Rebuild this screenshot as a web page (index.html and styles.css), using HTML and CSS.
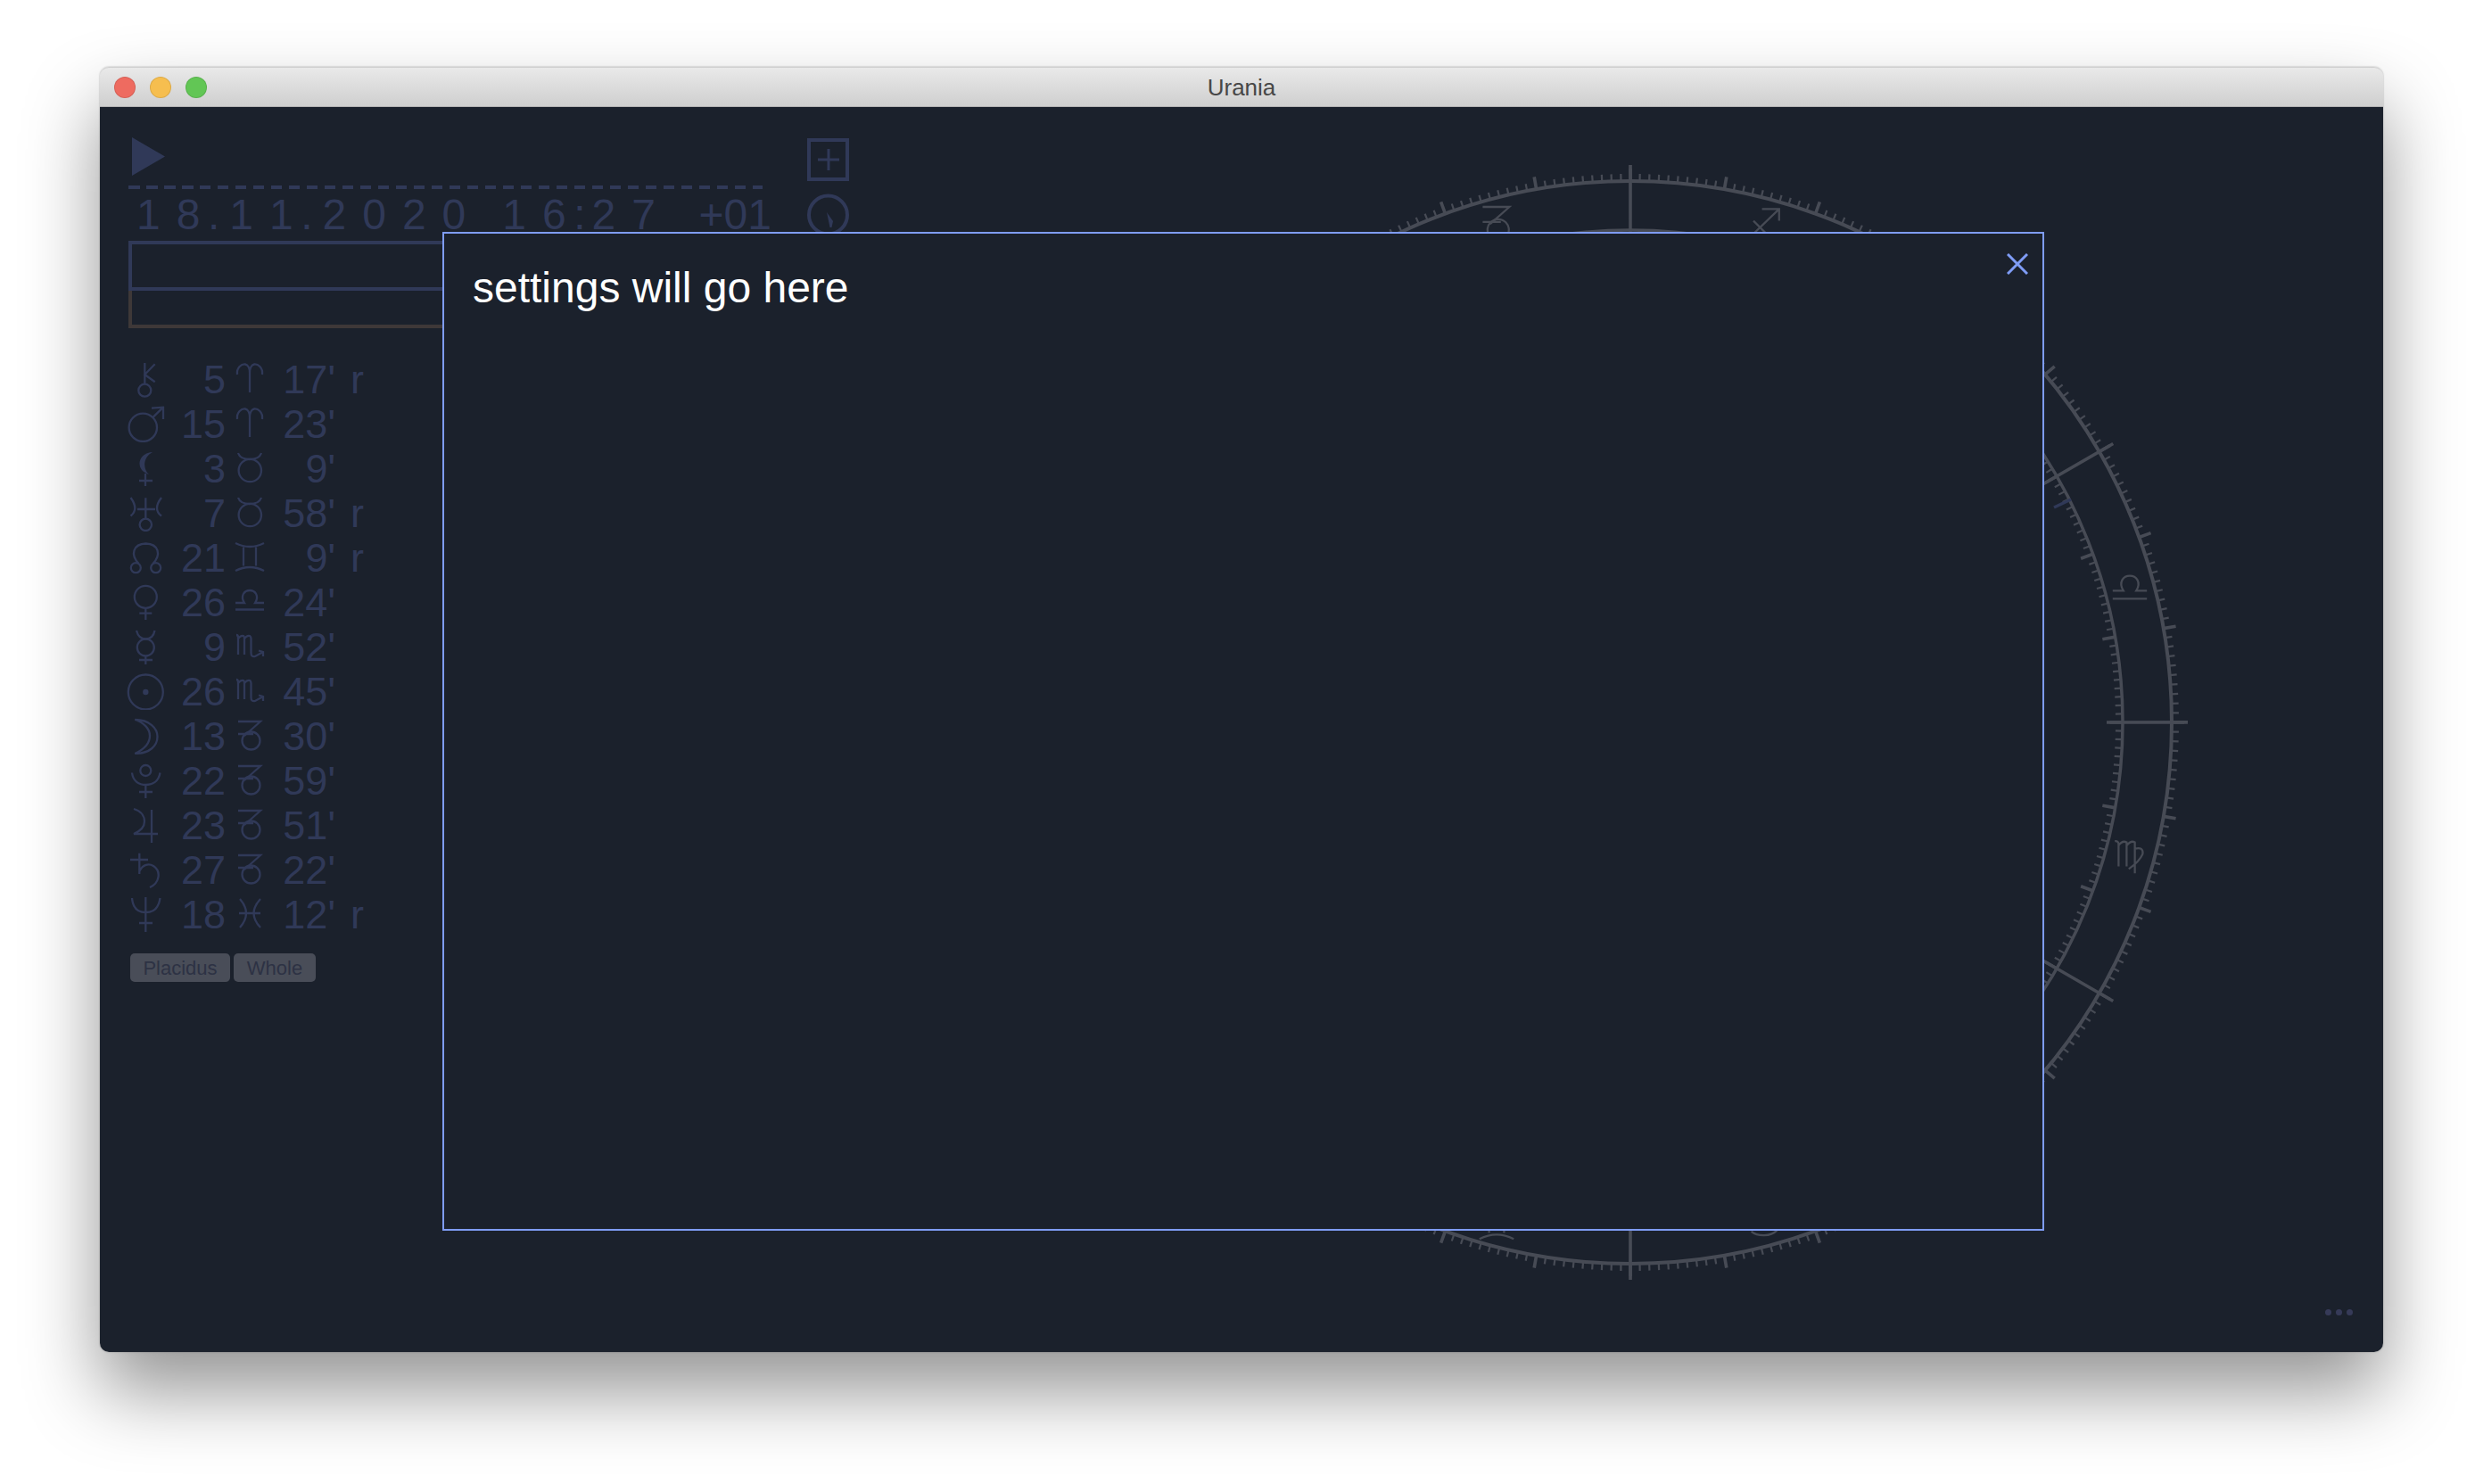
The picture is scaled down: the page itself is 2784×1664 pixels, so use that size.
FILE: index.html
```html
<!DOCTYPE html>
<html lang="en">
<head>
<meta charset="utf-8">
<title>Urania</title>
<link rel="stylesheet" href="styles.css">
</head>
<body>
<svg class="defs" width="0" height="0" aria-hidden="true">
  <defs>
    <symbol id="chiron" viewBox="-22 -22 44 44"><circle cx="-0.7" cy="13.7" r="7"/><path d="M-0.7-17V7M10.7-15.7-0.7-4 10.7 4.3"/></symbol>
    <symbol id="mars" viewBox="-22 -22 44 44"><circle cx="-2.7" cy="5.3" r="15.7"/><path d="M8-5.7 20-17.3M7-16.3 20-17.3V-4"/></symbol>
    <symbol id="lilith" viewBox="-22 -22 44 44"><path class="solid" d="M8-17C-9-16-12 3 4 8-3 2-3-11 8-17Z"/><path d="M0 7V21M-7 15H8"/></symbol>
    <symbol id="uranus" viewBox="-22 -22 44 44"><circle cx="0.3" cy="14.3" r="6.7"/><path d="M.3-15.7V7.6M-16.5-16Q-7-3-16.5 4.5M18-16Q8-3 18 4.5M-9-3H11"/></symbol>
    <symbol id="node" viewBox="-22 -22 44 44"><circle cx="-10.7" cy="12.7" r="5.5"/><circle cx="11.7" cy="12.7" r="5.5"/><path d="M-7.5 8C-17-2-14-14 .5-14.5 15-14 18-2 8.5 8"/></symbol>
    <symbol id="venus" viewBox="-22 -22 44 44"><circle cx="0.3" cy="-4.7" r="12.5"/><path d="M.3 7.8V21M-6.7 13.7H7.3"/></symbol>
    <symbol id="mercury" viewBox="-22 -22 44 44"><circle cx="0.3" cy="2" r="9.5"/><path d="M.3 11.5V21M-7 16H8M-10-17C-8-9-4-7.5.3-7.5 5-7.5 9-9 10.5-17"/></symbol>
    <symbol id="sun" viewBox="-22 -22 44 44"><circle cx="0.3" cy="2" r="19.5"/><circle class="solid" cx="0.3" cy="2" r="3.2"/></symbol>
    <symbol id="moon" viewBox="-22 -22 44 44"><path d="M-11.7-17C5-17 13.5-7 13.5 2 13.5 12 5 21-11.7 21-1 16 5 9 5 1 5-7-2-14-11.7-17Z"/></symbol>
    <symbol id="pluto" viewBox="-22 -22 44 44"><circle cx="0.3" cy="-10" r="6"/><path d="M-15-7.5C-14 2-7 6 .3 6 8 6 15 2 16.5-7.5M.3 6V21M-7 14H8"/></symbol>
    <symbol id="jupiter" viewBox="-22 -22 44 44"><path d="M-13-17C-3-14-1-7-1-3-1 3-6 8-13 11H14M7-16V21"/></symbol>
    <symbol id="saturn" viewBox="-22 -22 44 44"><path d="M-6.7-17.3V6M-17-10H3M-6.7 3C-3-5 4-6 9-3 18 3 16 16 5 21"/></symbol>
    <symbol id="neptune" viewBox="-22 -22 44 44"><path d="M-15-17C-14-5-8-1 .3-1 8-1 15-5 16.5-17M.3-18V21M-7 11H8"/></symbol>
    <symbol id="aries" viewBox="-22 -22 44 44"><path d="M0 16V-6C0-11-2-15-5-15.5-9-16-15-12-14-4M0-6C0-11 2-15 5-15.5 9-16 15-12 14-4"/></symbol>
    <symbol id="taurus" viewBox="-22 -22 44 44"><circle cx="0.3" cy="3.5" r="12.7"/><path d="M-13-16C-11-10-6-9 0-9 6-9 11-10 13-16"/></symbol>
    <symbol id="gemini" viewBox="-22 -22 44 44"><path d="M-16-15Q0-7 16-15M-16 16Q0 8 16 16M-7-10.500V10.500M7-10.500V10.500"/></symbol>
    <symbol id="libra" viewBox="-22 -22 44 44"><path d="M-16 9.500H16M-16 2H-6C-11-6-6-12 0-12 6-12 11-6 6 2H16"/></symbol>
    <symbol id="scorpio" viewBox="-22 -22 44 44"><path d="M-15-12Q-13-12-13-9V10M-13-8Q-10-12-7-11-6-10-6-8V10M-6-8Q-3-12 0-11 1.500-10 1.500-8V8Q1.500 13 6 12L15 7M10 5.500 15 7V12"/></symbol>
    <symbol id="capricorn" viewBox="-22 -22 44 44"><path d="M-13-15H12L-6 1M-13-1H4"/><circle cx="1.500" cy="6.500" r="10"/></symbol>
    <symbol id="pisces" viewBox="-22 -22 44 44"><path d="M-11-16Q3 0-11 16M12-16Q-3 0 12 16M-12 0H12"/></symbol>
    <symbol id="sagittarius" viewBox="-22 -22 44 44"><path d="M-14 14 14-13M-2-13H14V-2M-10-2 5 13"/></symbol>
    <symbol id="virgo" viewBox="-22 -22 44 44"><path d="M-14-14Q-10.500-14.500-10.500-11V9.500M-10.500-10Q-7-15-3-13V9.500M-3-10Q1-15 4.700-13V16M4.700-7Q13-9 12-2 9 5-1 12"/></symbol>
    <symbol id="cancer" viewBox="-22 -22 44 44"><path d="M-12 9C-6 14 6 14 12 8"/></symbol>
  </defs>
</svg>

<div class="window">
  <header class="titlebar">
    <div class="lights">
      <span class="light light-close"></span>
      <span class="light light-min"></span>
      <span class="light light-max"></span>
    </div>
    <div class="title">Urania</div>
  </header>

  <main class="content">
    <section class="sidebar">
      <div class="controls">
        <div class="play-stack">
          <svg class="play" width="37" height="43" viewBox="0 0 37 43"><path d="M0 0 37 21.500 0 43Z"/></svg>
          <div class="dashes"></div>
        </div>
        <div class="add-box"><svg width="24" height="24" viewBox="0 0 24 24"><path d="M12 0V24M0 12H24"/></svg></div>
        <div class="date">
          <span class="ch">1</span><span class="ch tight">8</span><span class="ch dot">.</span><span class="ch">1</span><span class="ch tight">1</span><span class="ch dot">.</span><span class="ch">2</span><span class="ch">0</span><span class="ch">2</span><span class="ch wide">0</span><span class="ch">1</span><span class="ch tight">6</span><span class="ch colon">:</span><span class="ch">2</span><span class="ch">7</span>
          <span class="zone">+01</span>
        </div>
        <svg class="clock" width="47" height="48" viewBox="0 0 47 48"><circle cx="23.500" cy="24" r="21.500"/><path class="solid" d="M22 21 29 31 27.500 38 25.500 38Z"/></svg>
      </div>

      <div class="range">
        <div class="range-top"></div>
        <div class="range-bottom"></div>
      </div>

      <div class="positions">
        <svg class="glyph"><use href="#chiron"/></svg><span class="deg">5</span><svg class="glyph sign"><use href="#aries"/></svg><span class="min">17'</span><span class="retro">r</span>
        <svg class="glyph"><use href="#mars"/></svg><span class="deg">15</span><svg class="glyph sign"><use href="#aries"/></svg><span class="min">23'</span><span class="retro"></span>
        <svg class="glyph"><use href="#lilith"/></svg><span class="deg">3</span><svg class="glyph sign"><use href="#taurus"/></svg><span class="min">9'</span><span class="retro"></span>
        <svg class="glyph"><use href="#uranus"/></svg><span class="deg">7</span><svg class="glyph sign"><use href="#taurus"/></svg><span class="min">58'</span><span class="retro">r</span>
        <svg class="glyph"><use href="#node"/></svg><span class="deg">21</span><svg class="glyph sign"><use href="#gemini"/></svg><span class="min">9'</span><span class="retro">r</span>
        <svg class="glyph"><use href="#venus"/></svg><span class="deg">26</span><svg class="glyph sign"><use href="#libra"/></svg><span class="min">24'</span><span class="retro"></span>
        <svg class="glyph"><use href="#mercury"/></svg><span class="deg">9</span><svg class="glyph sign"><use href="#scorpio"/></svg><span class="min">52'</span><span class="retro"></span>
        <svg class="glyph"><use href="#sun"/></svg><span class="deg">26</span><svg class="glyph sign"><use href="#scorpio"/></svg><span class="min">45'</span><span class="retro"></span>
        <svg class="glyph"><use href="#moon"/></svg><span class="deg">13</span><svg class="glyph sign"><use href="#capricorn"/></svg><span class="min">30'</span><span class="retro"></span>
        <svg class="glyph"><use href="#pluto"/></svg><span class="deg">22</span><svg class="glyph sign"><use href="#capricorn"/></svg><span class="min">59'</span><span class="retro"></span>
        <svg class="glyph"><use href="#jupiter"/></svg><span class="deg">23</span><svg class="glyph sign"><use href="#capricorn"/></svg><span class="min">51'</span><span class="retro"></span>
        <svg class="glyph"><use href="#saturn"/></svg><span class="deg">27</span><svg class="glyph sign"><use href="#capricorn"/></svg><span class="min">22'</span><span class="retro"></span>
        <svg class="glyph"><use href="#neptune"/></svg><span class="deg">18</span><svg class="glyph sign"><use href="#pisces"/></svg><span class="min">12'</span><span class="retro">r</span>
      </div>

      <div class="systems">
        <button class="system system-placidus">Placidus</button>
        <button class="system system-whole">Whole</button>
      </div>
    </section>

    <svg class="wheel" width="1280" height="1280" viewBox="0 0 1280 1280">
      <circle class="ring outer" cx="640" cy="640" r="607"/>
      <circle class="ring inner" cx="640" cy="640" r="552"/>
      <circle class="ticks outer-small" cx="640" cy="640" r="611" pathLength="360"/>
      <circle class="ticks outer-mid" cx="640" cy="640" r="614" pathLength="360"/>
      <circle class="ticks inner-small" cx="640" cy="640" r="548" pathLength="360"/>
      <circle class="ticks inner-mid" cx="640" cy="640" r="545" pathLength="360"/>
      <circle class="ticks axes" cx="640" cy="640" r="579.500" pathLength="360"/>
      <line class="planet-mark" x1="1115" y1="399" x2="1134" y2="390"/>
      <g class="wheel-signs">
        <use href="#libra" x="1173.600" y="463.600" width="52.800" height="52.800"/>
        <use href="#virgo" x="1173.600" y="763.600" width="52.800" height="52.800"/>
        <use href="#sagittarius" x="763.600" y="53.600" width="52.800" height="52.800"/>
        <use href="#capricorn" x="463.600" y="53.600" width="52.800" height="52.800"/>
        <use href="#gemini" x="463.600" y="1173.600" width="52.800" height="52.800"/>
        <use href="#cancer" x="763.600" y="1173.600" width="52.800" height="52.800"/>
      </g>
    </svg>

    <div class="more"><span></span><span></span><span></span></div>

    <div class="modal">
      <p class="modal-text">settings will go here</p>
      <svg class="modal-close" width="24" height="24" viewBox="0 0 24 24"><path d="M1 1 23 23M23 1 1 23"/></svg>
    </div>
  </main>
</div>
</body>
</html>
```

FILE: styles.css
```css
* { box-sizing: border-box; }

html, body { margin: 0; height: 100%; }

body {
  width: 2784px;
  height: 1664px;
  padding: 75px 112px 0;
  background: #fff;
  overflow: hidden;
  font-family: "Liberation Sans", Arial, sans-serif;
}

.defs { position: absolute; }

.solid { fill: #303958; stroke: none; }

.window {
  width: 2560px;
  height: 1441px;
  border-radius: 10px;
  display: flex;
  flex-direction: column;
  box-shadow: 0 44px 84px rgba(0, 0, 0, 0.42), 0 0 2px rgba(0, 0, 0, 0.35);
}

.titlebar {
  height: 45px;
  flex: none;
  display: flex;
  align-items: center;
  position: relative;
  border-radius: 10px 10px 0 0;
  background: linear-gradient(#e9e9e9, #cfcfcf);
  border-top: 1px solid #cfcfcf;
  border-bottom: 1px solid #b5b5b5;
}

.lights {
  display: flex;
  gap: 16px;
  padding-left: 16px;
}

.light {
  width: 24px;
  height: 24px;
  border-radius: 50%;
  border: 1px solid rgba(0, 0, 0, 0.1);
}
.light-close { background: #ee6b60; }
.light-min { background: #f6be4f; }
.light-max { background: #62c655; }

.title {
  position: absolute;
  left: 0;
  right: 0;
  text-align: center;
  font-size: 26px;
  color: #474747;
  line-height: 44px;
}

.content {
  position: relative;
  flex: 1;
  display: flex;
  align-items: flex-start;
  background: #1b212c;
  border-radius: 0 0 10px 10px;
  color: #303958;
}

.sidebar {
  width: 1076px;
  flex: none;
  padding: 34px 0 0 32px;
}

.controls {
  display: grid;
  grid-template-columns: 711px 47px;
  column-gap: 50px;
  row-gap: 5px;
}

.play-stack { height: 58px; }

.play {
  display: block;
  margin-left: 4px;
  fill: #303958;
}

.dashes {
  height: 4px;
  margin-top: 11px;
  background: repeating-linear-gradient(90deg, #303958 0, #303958 12.500px, transparent 12.500px, transparent 20px);
}

.add-box {
  width: 47px;
  height: 48px;
  margin-top: 1px;
  border: 4px solid #303958;
  display: flex;
  align-items: center;
  justify-content: center;
}
.add-box svg { stroke: #303958; stroke-width: 3; fill: none; }

.date {
  display: flex;
  font-size: 48px;
  line-height: 48px;
  height: 48px;
  padding-left: 9px;
}

.ch { margin-right: 18px; }
.ch.tight { margin-right: 8.500px; }
.ch.dot { margin-right: 11px; }
.ch.colon { margin-right: 7px; }
.ch.wide { margin-right: 41px; }

.zone {
  margin-left: auto;
  margin-right: -10px;
}

.clock { display: block; fill: none; stroke: #303958; stroke-width: 4; }

.range { margin-top: 5px; width: 711px; }

.range-top {
  height: 56px;
  border: 4px solid #303958;
}

.range-bottom {
  height: 42px;
  border: 4px solid #3e3838;
  border-top: 0;
}

.positions {
  display: grid;
  grid-template-columns: 38px 72px 49px 74px 60px;
  grid-auto-rows: 50px;
  margin-top: 31px;
  margin-left: -1px;
  font-size: 45px;
  line-height: 50px;
  align-items: center;
}

.glyph {
  width: 44px;
  height: 44px;
  margin-left: -2px;
  fill: none;
  stroke: #303958;
  stroke-width: 2.300;
  overflow: visible;
}

.glyph.sign { margin-left: 5px; }

.deg, .min, .retro {
  align-self: start;
  margin-top: 2px;
}

.deg, .min { text-align: right; }

.retro { padding-left: 17px; }

.systems {
  display: flex;
  gap: 4px;
  margin-top: 20px;
  margin-left: 2px;
}

.system {
  height: 32px;
  padding: 2px 0 0;
  border: 0;
  border-radius: 5px;
  background: #494d58;
  color: #2d3244;
  font: 22px/30px "Liberation Sans", Arial, sans-serif;
}
.system-placidus { width: 112px; }
.system-whole { width: 92px; }

.wheel {
  flex: none;
  margin-top: 50px;
}

.ring { fill: none; stroke: #474b55; }
.ring.outer { stroke-width: 4; }
.ring.inner { stroke-width: 3.500; }

.ticks { fill: none; stroke: #474b55; }

.outer-small { stroke-width: 8; stroke-dasharray: .21 .79; stroke-dashoffset: .105; }
.outer-mid { stroke-width: 14; stroke-dasharray: .34 9.660; stroke-dashoffset: .17; }
.inner-small { stroke-width: 8; stroke-dasharray: .23 .77; stroke-dashoffset: .115; }
.inner-mid { stroke-width: 15; stroke-dasharray: .38 9.620; stroke-dashoffset: .19; }
.axes { stroke-width: 91; stroke-dasharray: .36 29.640; stroke-dashoffset: .18; }

.planet-mark { stroke: #303958; stroke-width: 3.500; }

.wheel-signs { fill: none; stroke: #474b55; stroke-width: 1.900; }

.more {
  position: absolute;
  right: 34px;
  top: 1348px;
  display: flex;
  gap: 5px;
}
.more span {
  width: 7px;
  height: 7px;
  border-radius: 50%;
  background: #363a58;
}

.modal {
  position: absolute;
  left: 384px;
  top: 140px;
  width: 1796px;
  height: 1120px;
  padding: 33px 32px 32px;
  background: #1b212c;
  border: 2px solid #7f9cf5;
}

.modal-text {
  margin: 0;
  font-size: 48px;
  line-height: 56px;
  color: #fff;
}

.modal-close {
  position: absolute;
  top: 22px;
  right: 16px;
  fill: none;
  stroke: #7f9cf5;
  stroke-width: 3;
}
```
